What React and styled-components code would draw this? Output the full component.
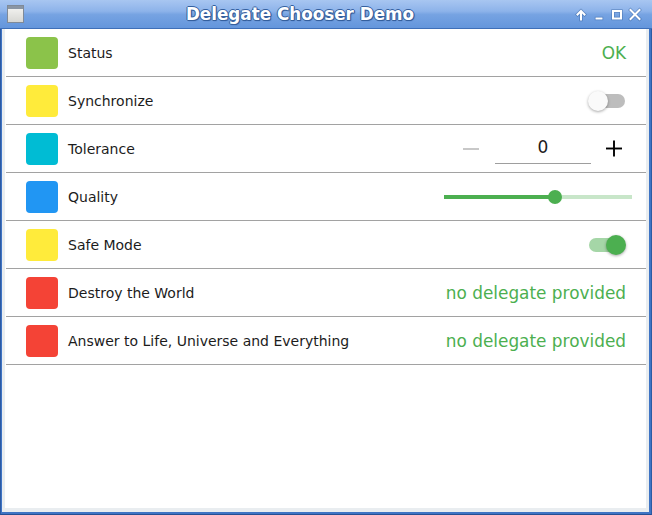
import React, { useState } from "react";
import styled, { createGlobalStyle } from "styled-components";

const Global = createGlobalStyle`
  html, body { margin: 0; padding: 0; background: #ffffff; }
  body { font-family: "DejaVu Sans", "Liberation Sans", sans-serif; }
  * { box-sizing: border-box; }
`;

const Window = styled.div`
  width: 652px;
  height: 515px;
  display: flex;
  flex-direction: column;
  background: #3f74c4;
  border-bottom: 1px solid #244f93;
  border-left: 1px solid #2c5aa3;
  border-right: 1px solid #2c5aa3;
`;

const TitleBar = styled.div`
  height: 29px;
  flex: none;
  display: flex;
  align-items: center;
  background: linear-gradient(#a8c6f1 0%, #8db3ea 40%, #76a3e2 52%, #6496dc 100%);
  border-bottom: 1px solid #3e6fb8;
  margin: 0 -1px;
`;

const TitleIconBox = styled.div`
  width: 28px;
  display: flex;
  align-items: center;
  justify-content: center;
  padding-left: 2px;
`;

const TitleText = styled.div`
  flex: 1;
  text-align: center;
  color: #ffffff;
  font-weight: bold;
  font-size: 16.8px;
  text-shadow: 1px 0 0 #34609f, -1px 0 0 #34609f, 0 1px 0 #34609f, 0 -1px 0 #34609f,
    1px 1px 1px #2a5190;
`;

const TitleButtons = styled.div`
  width: 80px;
  display: flex;
  align-items: center;
  padding-right: 8px;
`;

const TitleButton = styled.div`
  width: 18px;
  height: 20px;
  display: flex;
  align-items: center;
  justify-content: center;
`;

const Frame = styled.div`
  flex: 1;
  display: flex;
  padding: 0 2px 2px 1px;
`;

const ClientArea = styled.div`
  flex: 1;
  display: flex;
  background: #e9edf0;
  padding: 0 3px 4px 3px;
`;

const Content = styled.div`
  flex: 1;
  background: #ffffff;
  display: flex;
  flex-direction: column;
`;

const Row = styled.div`
  height: 48px;
  flex: none;
  display: flex;
  align-items: center;
  margin: 0 0 0 1px;
  padding: 0 20px 0 20px;
  border-bottom: 1px solid #a2a2a2;
`;

const Swatch = styled.div`
  width: 32px;
  height: 32px;
  border-radius: 4px;
  background: ${(p) => p.$color};
  flex: none;
`;

const Label = styled.div`
  margin-left: 10px;
  font-size: 14px;
  color: #1c1c1c;
  flex: 1;
`;

const GreenText = styled.div`
  color: #4caf50;
  font-size: 16.9px;
`;

const SwitchTrack = styled.div`
  position: relative;
  width: 38px;
  height: 20px;
  flex: none;
  &::before {
    content: "";
    position: absolute;
    left: 1px;
    right: 1px;
    top: 3px;
    height: 14px;
    border-radius: 7px;
    background: ${(p) => (p.$on ? "#a5d6a7" : "#bdbdbd")};
  }
`;

const SwitchKnob = styled.div`
  position: absolute;
  top: 0;
  left: ${(p) => (p.$on ? "18px" : "0")};
  width: 20px;
  height: 20px;
  border-radius: 50%;
  background: ${(p) => (p.$on ? "#4caf50" : "#fafafa")};
  box-shadow: 0 1px 3px rgba(0, 0, 0, 0.35);
`;

const Spin = styled.div`
  display: flex;
  align-items: center;
  margin-right: 4px;
`;

const SpinButton = styled.div`
  width: 16px;
  height: 16px;
  display: flex;
  align-items: center;
  justify-content: center;
`;

const SpinField = styled.div`
  width: 96px;
  margin: 0 15px 0 16px;
  height: 32px;
  border-bottom: 1px solid #9e9e9e;
  display: flex;
  justify-content: center;
  align-items: flex-start;
  font-size: 17px;
  color: #1c1c1c;
  padding-top: 5px;
  transform: translateY(-1px);
`;

const Slider = styled.div`
  position: relative;
  width: 188px;
  height: 14px;
  margin-right: -6px;
`;

const SliderTrack = styled.div`
  position: absolute;
  left: 0;
  right: 0;
  top: 5px;
  height: 4px;
  background: #c8e6c9;
`;

const SliderFill = styled.div`
  position: absolute;
  left: 0;
  top: 5px;
  height: 4px;
  background: #4caf50;
`;

const SliderHandle = styled.div`
  position: absolute;
  top: 0;
  width: 14px;
  height: 14px;
  margin-left: -7px;
  border-radius: 50%;
  background: #4caf50;
`;

const WindowIcon = () => (
  <svg width="17" height="18" viewBox="0 0 17 18">
    <defs>
      <linearGradient id="wg" x1="0" y1="0" x2="0" y2="1">
        <stop offset="0" stopColor="#f6f6f4" />
        <stop offset="1" stopColor="#d6d6d2" />
      </linearGradient>
    </defs>
    <rect x="0.5" y="0.5" width="16" height="17" fill="url(#wg)" stroke="#7f8a98" />
    <rect x="1" y="1" width="15" height="3" fill="#8a95a3" />
  </svg>
);

const TBIcon = ({ children }) => (
  <svg width="12" height="12" viewBox="0 0 12 12" style={{ overflow: "visible" }}>
    <g fill="none" stroke="#2f5b9c" strokeWidth="3.4" strokeLinecap="square" opacity="0.5">
      {children}
    </g>
    <g fill="none" stroke="#ffffff" strokeWidth="2" strokeLinecap="square">
      {children}
    </g>
  </svg>
);

const Minus = () => (
  <svg width="16" height="4" viewBox="0 0 16 4">
    <rect x="0" y="1" width="16" height="2" fill="#c8c8c8" />
  </svg>
);

const Plus = () => (
  <svg width="17" height="17" viewBox="0 0 17 17">
    <rect x="0" y="7.5" width="17" height="2" fill="#000" />
    <rect x="7.5" y="0" width="2" height="17" fill="#000" />
  </svg>
);

const Switch = ({ on }) => (
  <SwitchTrack $on={on}>
    <SwitchKnob $on={on} />
  </SwitchTrack>
);

export default function App() {
  const [value] = useState(0.59);
  return (
    <>
      <Global />
      <Window>
        <TitleBar>
          <TitleIconBox>
            <WindowIcon />
          </TitleIconBox>
          <TitleText>Delegate Chooser Demo</TitleText>
          <TitleButtons>
            <TitleButton>
              <TBIcon>
                <path d="M6 11.5V3.5 M2.5 6.5L6 3L9.5 6.5" />
              </TBIcon>
            </TitleButton>
            <TitleButton>
              <TBIcon>
                <path d="M3.5 10.5H8.5" />
              </TBIcon>
            </TitleButton>
            <TitleButton>
              <TBIcon>
                <rect x="2" y="3" width="8" height="7.5" />
              </TBIcon>
            </TitleButton>
            <TitleButton>
              <TBIcon>
                <path d="M1.5 2L10.5 11 M10.5 2L1.5 11" />
              </TBIcon>
            </TitleButton>
          </TitleButtons>
        </TitleBar>
        <Frame>
          <ClientArea>
            <Content>
              <Row>
                <Swatch $color="#8bc34a" />
                <Label>Status</Label>
                <GreenText>OK</GreenText>
              </Row>
              <Row>
                <Swatch $color="#ffeb3b" />
                <Label>Synchronize</Label>
                <Switch on={false} />
              </Row>
              <Row>
                <Swatch $color="#00bcd4" />
                <Label>Tolerance</Label>
                <Spin>
                  <SpinButton>
                    <Minus />
                  </SpinButton>
                  <SpinField>0</SpinField>
                  <SpinButton>
                    <Plus />
                  </SpinButton>
                </Spin>
              </Row>
              <Row>
                <Swatch $color="#2196f3" />
                <Label>Quality</Label>
                <Slider>
                  <SliderTrack />
                  <SliderFill style={{ width: `${value * 100}%` }} />
                  <SliderHandle style={{ left: `${value * 100}%` }} />
                </Slider>
              </Row>
              <Row>
                <Swatch $color="#ffeb3b" />
                <Label>Safe Mode</Label>
                <Switch on={true} />
              </Row>
              <Row>
                <Swatch $color="#f44336" />
                <Label>Destroy the World</Label>
                <GreenText>no delegate provided</GreenText>
              </Row>
              <Row>
                <Swatch $color="#f44336" />
                <Label>Answer to Life, Universe and Everything</Label>
                <GreenText>no delegate provided</GreenText>
              </Row>
            </Content>
          </ClientArea>
        </Frame>
      </Window>
    </>
  );
}
